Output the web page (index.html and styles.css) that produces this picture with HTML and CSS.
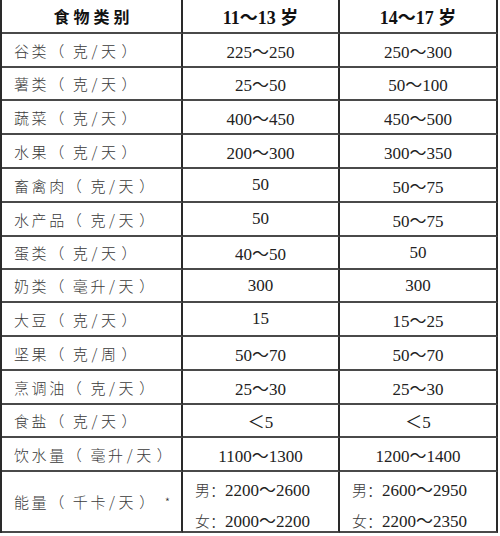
FILE: index.html
```html
<!DOCTYPE html>
<html lang="zh">
<head>
<meta charset="utf-8">
<link rel="stylesheet" href="styles.css">
</head>
<body>
<div class="table">
  <div class="cell head name">食物类别</div>
  <div class="cell head">11～13 岁</div>
  <div class="cell head last">14～17 岁</div>

  <div class="cell name">谷类<span class="pl">（</span>克<span class="sl">/</span>天<span class="pr">）</span></div><div class="cell num">225～250</div><div class="cell num last">250～300</div>
  <div class="cell name">薯类<span class="pl">（</span>克<span class="sl">/</span>天<span class="pr">）</span></div><div class="cell num">25～50</div><div class="cell num last">50～100</div>
  <div class="cell name">蔬菜<span class="pl">（</span>克<span class="sl">/</span>天<span class="pr">）</span></div><div class="cell num">400～450</div><div class="cell num last">450～500</div>
  <div class="cell name">水果<span class="pl">（</span>克<span class="sl">/</span>天<span class="pr">）</span></div><div class="cell num">200～300</div><div class="cell num last">300～350</div>
  <div class="cell name">畜禽肉<span class="pl">（</span>克<span class="sl">/</span>天<span class="pr">）</span></div><div class="cell num">50</div><div class="cell num last">50～75</div>
  <div class="cell name">水产品<span class="pl">（</span>克<span class="sl">/</span>天<span class="pr">）</span></div><div class="cell num">50</div><div class="cell num last">50～75</div>
  <div class="cell name">蛋类<span class="pl">（</span>克<span class="sl">/</span>天<span class="pr">）</span></div><div class="cell num">40～50</div><div class="cell num last">50</div>
  <div class="cell name">奶类<span class="pl">（</span>毫升<span class="sl">/</span>天<span class="pr">）</span></div><div class="cell num">300</div><div class="cell num last">300</div>
  <div class="cell name">大豆<span class="pl">（</span>克<span class="sl">/</span>天<span class="pr">）</span></div><div class="cell num">15</div><div class="cell num last">15～25</div>
  <div class="cell name">坚果<span class="pl">（</span>克<span class="sl">/</span>周<span class="pr">）</span></div><div class="cell num">50～70</div><div class="cell num last">50～70</div>
  <div class="cell name">烹调油<span class="pl">（</span>克<span class="sl">/</span>天<span class="pr">）</span></div><div class="cell num">25～30</div><div class="cell num last">25～30</div>
  <div class="cell name">食盐<span class="pl">（</span>克<span class="sl">/</span>天<span class="pr">）</span></div><div class="cell num">＜5</div><div class="cell num last">＜5</div>
  <div class="cell name">饮水量<span class="pl">（</span>毫升<span class="sl">/</span>天<span class="pr">）</span></div><div class="cell num">1100～1300</div><div class="cell num last">1200～1400</div>
  <div class="cell name">能量<span class="pl">（</span>千卡<span class="sl">/</span>天<span class="pr">）</span><span class="star">*</span></div>
  <div class="cell energy"><span><span class="cj">男：</span>2200～2600</span><span><span class="cj">女：</span>2000～2200</span></div>
  <div class="cell energy last"><span><span class="cj">男：</span>2600～2950</span><span><span class="cj">女：</span>2200～2350</span></div>
</div>
</body>
</html>
```
FILE: styles.css
```css
html, body {
  margin: 0;
  padding: 0;
  background: #fff;
}
.table {
  display: grid;
  grid-template-columns: 181px 157px 158px;
  grid-template-rows: 34px 34px 33px 34px 34px 34px 34px 33px 33px 34px 34px 34px 33px 34px 61px;
  width: 498px;
  border-left: 2px solid #2a2a2a;
  box-sizing: border-box;
}
.cell {
  border-right: 2px solid #2a2a2a;
  border-bottom: 2px solid #4a4a4a;
  display: flex;
  align-items: center;
  justify-content: center;
  font-family: "Liberation Serif", "Noto Sans CJK SC", serif;
  font-size: 17px;
  color: #222;
  box-sizing: border-box;
}
.cell.name {
  justify-content: flex-start;
  padding-left: 12px;
  font-family: "Noto Sans CJK SC", sans-serif;
  font-size: 15px;
  font-weight: 300;
  letter-spacing: 2.6px;
  color: #3a3a3a;
}
.pl {
  margin-right: 6px;
}
.pr {
  margin-left: 3px;
}
.sl {
  margin: 0 1px;
}
.cell.head {
  font-weight: bold;
  color: #111;
  font-size: 18px;
}
.cell.head.name {
  justify-content: center;
  padding-left: 4px;
  font-family: "Noto Sans CJK SC", sans-serif;
  font-weight: 700;
  font-size: 16px;
  letter-spacing: 4px;
  color: #111;
}
.star {
  font-size: 12px;
  align-self: flex-start;
  margin-top: 21px;
  margin-left: 8px;
  letter-spacing: 0;
  color: #333;
}
.cell.energy {
  flex-direction: column;
  align-items: flex-start;
  justify-content: center;
  gap: 6px;
  padding-left: 12px;
  padding-top: 4px;
}
.cj {
  font-family: "Noto Sans CJK SC", sans-serif;
  font-weight: 300;
  font-size: 15px;
  color: #3a3a3a;
}
```
